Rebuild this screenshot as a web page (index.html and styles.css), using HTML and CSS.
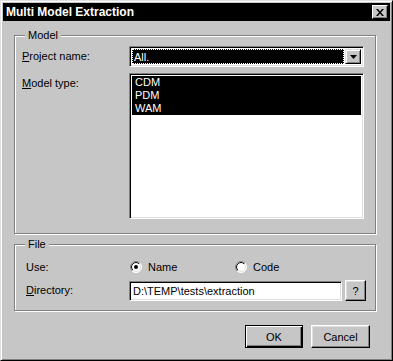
FILE: index.html
```html
<!DOCTYPE html>
<html lang="en">
<head>
    <meta charset="UTF-8">
    <meta name="viewport" content="width=device-width, initial-scale=1.0">
    <title>Multi Model Extraction</title>
    <link rel="stylesheet" href="styles.css">
</head>
<body>
    <div class="window">
        <div class="titlebar">
            <span class="title">Multi Model Extraction</span>
            <button class="close-btn" aria-label="Close">
                <svg width="8" height="7" viewBox="0 0 8 7">
                    <path d="M0 0h2l2 2.5L6 0h2L5 3.5 8 7H6L4 4.5 2 7H0l3-3.5z" fill="#000"/>
                </svg>
            </button>
        </div>

        <div class="dialog-body">
            <!-- Model group -->
            <fieldset class="group group-model">
                <legend>Model</legend>
                <div class="form-grid">
                    <label class="field-label"><u>P</u>roject name:</label>
                    <div class="combo sunken">
                        <div class="combo-value"><span>All.</span></div>
                        <div class="combo-arrow raised">
                            <svg width="7" height="4" viewBox="0 0 7 4"><path d="M0 0h7L3.5 4z" fill="#000"/></svg>
                        </div>
                    </div>

                    <label class="field-label label-top"><u>M</u>odel type:</label>
                    <div class="listbox sunken">
                        <div class="list-item selected">CDM</div>
                        <div class="list-item selected">PDM</div>
                        <div class="list-item selected">WAM</div>
                    </div>
                </div>
            </fieldset>

            <!-- File group -->
            <fieldset class="group group-file">
                <legend>File</legend>
                <div class="form-grid file-grid">
                    <span class="field-label">Use:</span>
                    <div class="radio-row">
                        <label class="radio">
                            <svg width="12" height="12" viewBox="0 0 12 12">
                                <defs>
                                    <linearGradient id="rOut" x1="0" y1="0" x2="1" y2="1">
                                        <stop offset="0.5" stop-color="#808080"/>
                                        <stop offset="0.5" stop-color="#fff"/>
                                    </linearGradient>
                                    <linearGradient id="rIn" x1="0" y1="0" x2="1" y2="1">
                                        <stop offset="0.5" stop-color="#000"/>
                                        <stop offset="0.5" stop-color="#dfdfdf"/>
                                    </linearGradient>
                                </defs>
                                <circle cx="6" cy="6" r="5.5" fill="#fff" stroke="url(#rOut)"/>
                                <circle cx="6" cy="6" r="4.5" fill="#fff" stroke="url(#rIn)"/>
                                <circle cx="6" cy="6" r="2" fill="#000"/>
                            </svg>
                            Name
                        </label>
                        <label class="radio">
                            <svg width="12" height="12" viewBox="0 0 12 12">
                                <circle cx="6" cy="6" r="5.5" fill="#fff" stroke="url(#rOut)"/>
                                <circle cx="6" cy="6" r="4.5" fill="#fff" stroke="url(#rIn)"/>
                            </svg>
                            Code
                        </label>
                    </div>

                    <label class="field-label"><u>D</u>irectory:</label>
                    <div class="dir-row">
                        <div class="textbox sunken">D:\TEMP\tests\extraction</div>
                        <button class="btn btn-small">?</button>
                    </div>
                </div>
            </fieldset>

            <div class="button-row">
                <button class="btn btn-default">OK</button>
                <button class="btn">Cancel</button>
            </div>
        </div>
    </div>
</body>
</html>
```

FILE: styles.css
```css
body {
    margin: 0;
    padding: 0;
    background-color: #c6c6c6;
    font-family: 'Liberation Sans', Arial, sans-serif;
    font-size: 11px;
    color: #000;
}

.window {
    width: 393px;
    height: 361px;
    box-sizing: border-box;
    background-color: #c6c6c6;
    border: 1px solid;
    border-color: #dfdfdf #000 #000 #dfdfdf;
    box-shadow: inset 1px 1px 0 #fff, inset -1px -1px 0 #808080;
    padding: 2px;
}

.titlebar {
    height: 18px;
    background-color: #000;
    color: #fff;
    display: flex;
    align-items: center;
    justify-content: space-between;
    padding: 0 2px 0 3px;
}

.title {
    font-weight: bold;
    font-size: 12px;
}

.close-btn {
    width: 16px;
    height: 14px;
    padding: 0;
    display: flex;
    align-items: center;
    justify-content: center;
    background-color: #c6c6c6;
    border: 1px solid;
    border-color: #fff #000 #000 #fff;
    box-shadow: inset -1px -1px 0 #808080;
}

/* 3D helpers */
.sunken {
    box-sizing: border-box;
    border: 1px solid;
    border-color: #808080 #fff #fff #808080;
    box-shadow: inset 1px 1px 0 #000, inset -1px -1px 0 #dfdfdf;
}

.raised {
    box-sizing: border-box;
    background-color: #c6c6c6;
    border: 1px solid;
    border-color: #dfdfdf #000 #000 #dfdfdf;
    box-shadow: inset 1px 1px 0 #fff, inset -1px -1px 0 #808080;
}

/* Group boxes */
.group {
    margin: 0 14px 0 11px;
    padding: 0;
    min-inline-size: 0;
    border: 1px solid #808080;
    box-shadow: 1px 1px 0 #fff, inset 1px 1px 0 #fff;
}

.group legend {
    margin-left: 10px;
    padding: 0 3px;
    line-height: 13px;
    background-color: #c6c6c6;
}

.group-model {
    margin-top: 8px;
}

.group-file {
    margin-top: 4px;
}

.form-grid {
    display: grid;
    grid-template-columns: 107px 235px;
    row-gap: 6px;
    align-items: center;
    padding: 4px 0 14px 7px;
}

.field-label {
    line-height: 13px;
}

.label-top {
    align-self: start;
    padding-top: 4px;
}

/* Combo box */
.combo {
    height: 21px;
    display: flex;
    padding: 2px;
    background-color: #fff;
}

.combo-value {
    flex: 1;
    background-color: #000;
    color: #fff;
    border: 1px dotted #fff;
    display: flex;
    align-items: center;
    padding-left: 1px;
    margin-right: 1px;
}

.combo-arrow {
    width: 16px;
    display: flex;
    align-items: center;
    justify-content: center;
}

/* List box */
.listbox {
    height: 146px;
    background-color: #fff;
    padding: 2px;
}

.list-item {
    line-height: 13px;
    padding-left: 3px;
}

.list-item.selected {
    background-color: #000;
    color: #fff;
}

/* File group */
.file-grid {
    grid-template-columns: 103px 237px;
    row-gap: 5px;
    padding: 8px 0 9px 11px;
}

.radio-row {
    display: flex;
    height: 16px;
    align-items: center;
    padding-left: 1px;
}

.radio {
    width: 105px;
    display: flex;
    align-items: center;
    gap: 6px;
}

.dir-row {
    display: flex;
    align-items: center;
}

.textbox {
    width: 213px;
    height: 20px;
    background-color: #fff;
    padding: 0 3px;
    line-height: 18px;
    white-space: nowrap;
}

/* Push buttons */
.btn {
    box-sizing: border-box;
    font-family: inherit;
    font-size: 11px;
    color: #000;
    background-color: #c6c6c6;
    border: 1px solid;
    border-color: #fff #000 #000 #fff;
    box-shadow: inset -1px -1px 0 #808080, inset 1px 1px 0 #dfdfdf;
    padding: 0;
    width: 59px;
    height: 23px;
}

.btn-small {
    width: 21px;
    height: 21px;
    margin-left: 3px;
}

.btn-default {
    width: 58px;
    border-color: #000;
    box-shadow: inset 1px 1px 0 #fff, inset -1px -1px 0 #000, inset -2px -2px 0 #808080;
}

.button-row {
    display: flex;
    justify-content: flex-end;
    gap: 8px;
    margin: 14px 20px 0 0;
}
```
